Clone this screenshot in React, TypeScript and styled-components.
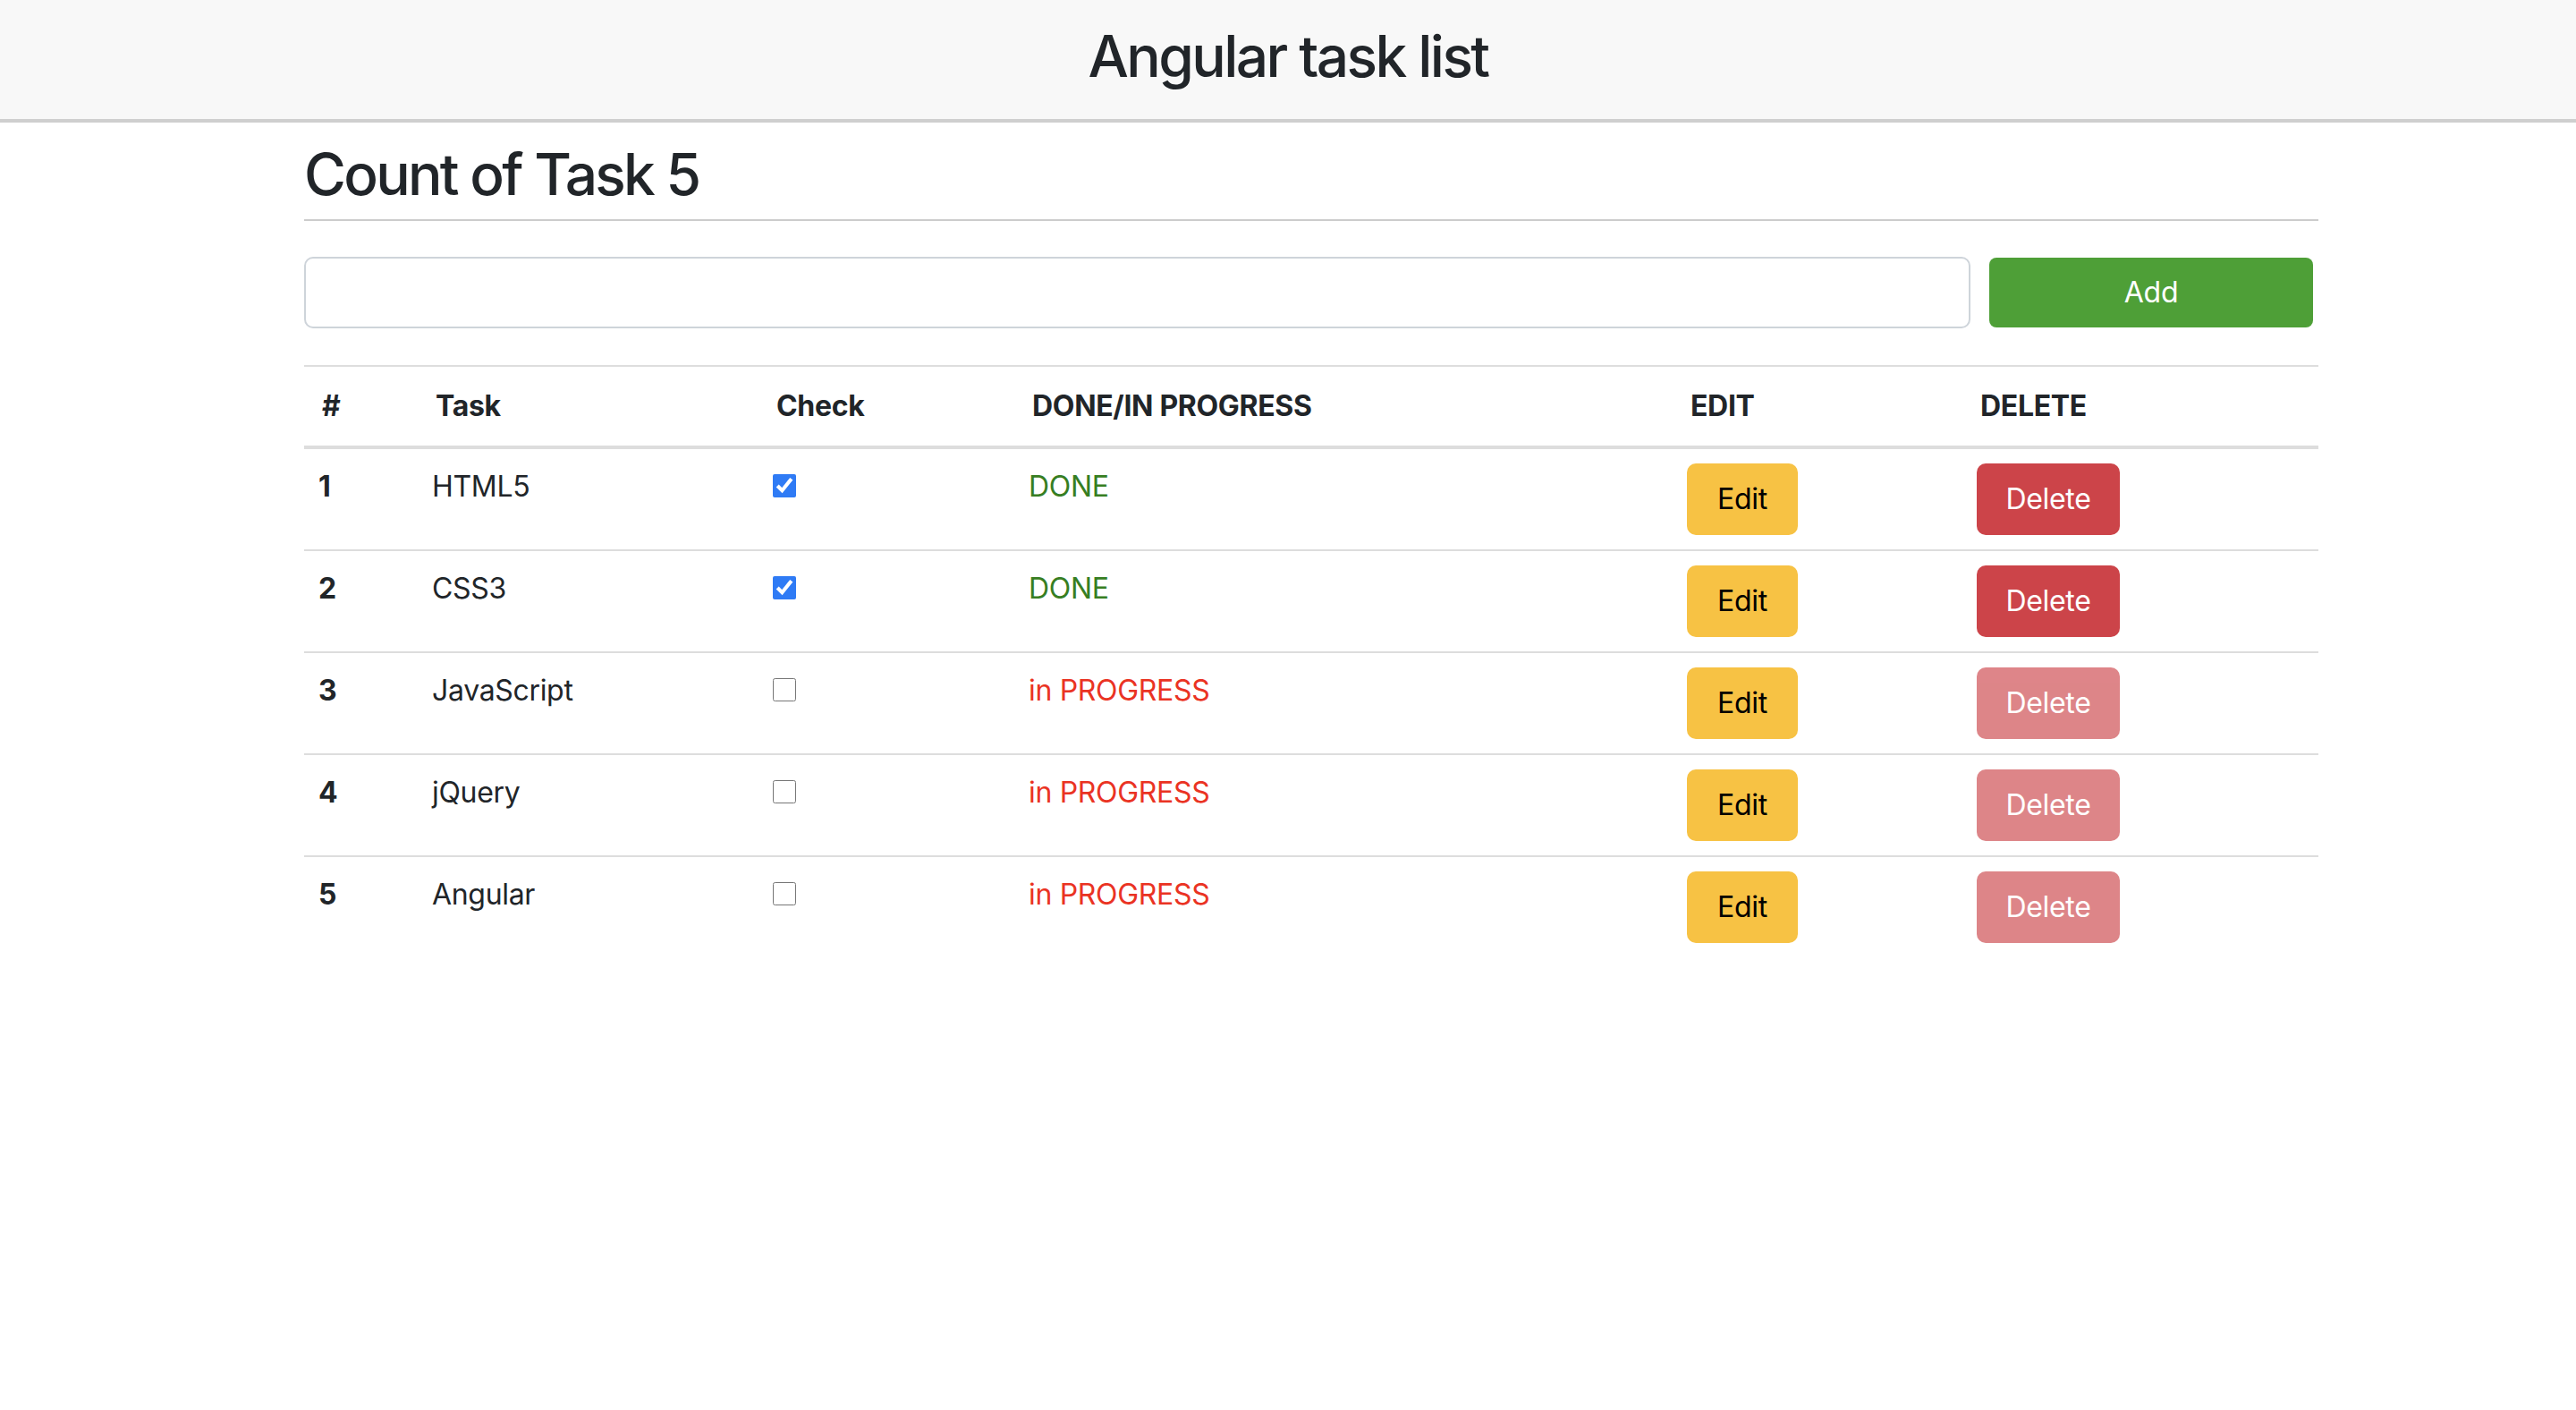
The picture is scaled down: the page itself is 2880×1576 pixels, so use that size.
import React, { useState } from 'react';
import styled, { createGlobalStyle } from 'styled-components';

const GlobalStyle = createGlobalStyle`
	body {
		margin: 0;
		background: #fff;
		color: #212529;
		font-family: Inter, 'Liberation Sans', sans-serif;
		font-size: 32px;
		line-height: 1.5;
	}
	* {
		box-sizing: border-box;
	}
`;

const Header = styled.header`
	height: 137px;
	background: #f8f8f8;
	border-bottom: 4px solid #cfcfcf;
	display: flex;
	align-items: center;
	justify-content: center;
	padding-bottom: 6px;
`;

const Title = styled.h1`
	margin: 0;
	font-size: 64px;
	font-weight: 500;
	line-height: 1.2;
	letter-spacing: -0.04em;
`;

const Main = styled.main`
	width: 2252px;
	margin-left: 340px;
`;

const Count = styled.h2`
	margin: 20px 0 0;
	padding-bottom: 11px;
	font-size: 64px;
	font-weight: 500;
	line-height: 1.2;
	letter-spacing: -0.042em;
	border-bottom: 2px solid #cccccc;
`;

const Form = styled.form`
	display: flex;
	align-items: center;
	gap: 21px;
	margin-top: 40px;
	padding-right: 6px;
`;

const Input = styled.input`
	flex: 1;
	height: 80px;
	border: 2px solid #ced4da;
	border-radius: 10px;
	padding: 0 24px;
	font: inherit;
	outline: none;
`;

const AddButton = styled.button`
	width: 362px;
	height: 78px;
	border: none;
	border-radius: 8px;
	background: #4e9f37;
	color: #fff;
	font: inherit;
	letter-spacing: -0.01em;
	cursor: pointer;
`;

const Table = styled.table`
	width: 100%;
	margin-top: 41px;
	border-collapse: collapse;
	table-layout: fixed;
`;

const HeadCell = styled.th`
	padding: 20px 16px 20px 20px;
	text-align: left;
	font-weight: 700;
	letter-spacing: -0.01em;
	border-top: 2px solid #dddddd;
	border-bottom: 4px solid #dddddd;
`;

const Row = styled.tr`
	border-bottom: 2px solid #dddddd;

	&:last-child {
		border-bottom: none;
	}
`;

const Cell = styled.td<{ $bold?: boolean }>`
	height: 112px;
	padding: 16px;
	vertical-align: top;
	font-weight: ${(p) => (p.$bold ? 700 : 400)};
	letter-spacing: -0.01em;
	line-height: 52px;
`;

const Check = styled.input`
	width: 26px;
	height: 26px;
	margin: 12px 0 0;
	accent-color: #2f7bf5;
	display: block;
`;

const Status = styled.span<{ $done: boolean }>`
	color: ${(p) => (p.$done ? '#377e22' : '#ea3323')};
`;

const Button = styled.button<{ $kind: 'edit' | 'delete' }>`
	display: block;
	width: ${(p) => (p.$kind === 'edit' ? '124px' : '160px')};
	height: 80px;
	border: none;
	border-radius: 10px;
	background: ${(p) => (p.$kind === 'edit' ? '#f7c244' : '#cc4449')};
	color: ${(p) => (p.$kind === 'edit' ? '#000' : '#fff')};
	font: inherit;
	letter-spacing: -0.01em;
	cursor: pointer;

	&:disabled {
		opacity: 0.65;
		cursor: default;
	}
`;

const widths = [127, 381, 286, 736, 324, 398];

const initial = [
	{ name: 'HTML5', done: true },
	{ name: 'CSS3', done: true },
	{ name: 'JavaScript', done: false },
	{ name: 'jQuery', done: false },
	{ name: 'Angular', done: false },
];

const App = () => {
	const [tasks, setTasks] = useState(initial);
	const [query, setQuery] = useState('');

	const handleSubmit: React.FormEventHandler<HTMLFormElement> = (e) => {
		e.preventDefault();
		if (query) {
			setTasks([...tasks, { name: query, done: false }]);
			setQuery('');
		}
	};

	const toggle = (i: number) => {
		setTasks(tasks.map((t, j) => (j === i ? { ...t, done: !t.done } : t)));
	};

	const remove = (i: number) => {
		setTasks(tasks.filter((_, j) => j !== i));
	};

	return (
		<>
			<GlobalStyle />
			<Header>
				<Title>Angular task list</Title>
			</Header>
			<Main>
				<Count>Count of Task {tasks.length}</Count>
				<Form onSubmit={handleSubmit}>
					<Input value={query} onChange={(e) => setQuery(e.target.value)} />
					<AddButton type="submit">Add</AddButton>
				</Form>
				<Table>
					<colgroup>
						{widths.map((w, i) => (
							<col key={i} style={{ width: w }} />
						))}
					</colgroup>
					<thead>
						<tr>
							<HeadCell>#</HeadCell>
							<HeadCell>Task</HeadCell>
							<HeadCell>Check</HeadCell>
							<HeadCell>DONE/IN PROGRESS</HeadCell>
							<HeadCell>EDIT</HeadCell>
							<HeadCell>DELETE</HeadCell>
						</tr>
					</thead>
					<tbody>
						{tasks.map((t, i) => (
							<Row key={t.name + i}>
								<Cell $bold>{i + 1}</Cell>
								<Cell>{t.name}</Cell>
								<Cell>
									<Check type="checkbox" checked={t.done} onChange={() => toggle(i)} />
								</Cell>
								<Cell>
									<Status $done={t.done}>{t.done ? 'DONE' : 'in PROGRESS'}</Status>
								</Cell>
								<Cell>
									<Button $kind="edit">Edit</Button>
								</Cell>
								<Cell>
									<Button $kind="delete" disabled={!t.done} onClick={() => remove(i)}>
										Delete
									</Button>
								</Cell>
							</Row>
						))}
					</tbody>
				</Table>
			</Main>
		</>
	);
};

export default App;
